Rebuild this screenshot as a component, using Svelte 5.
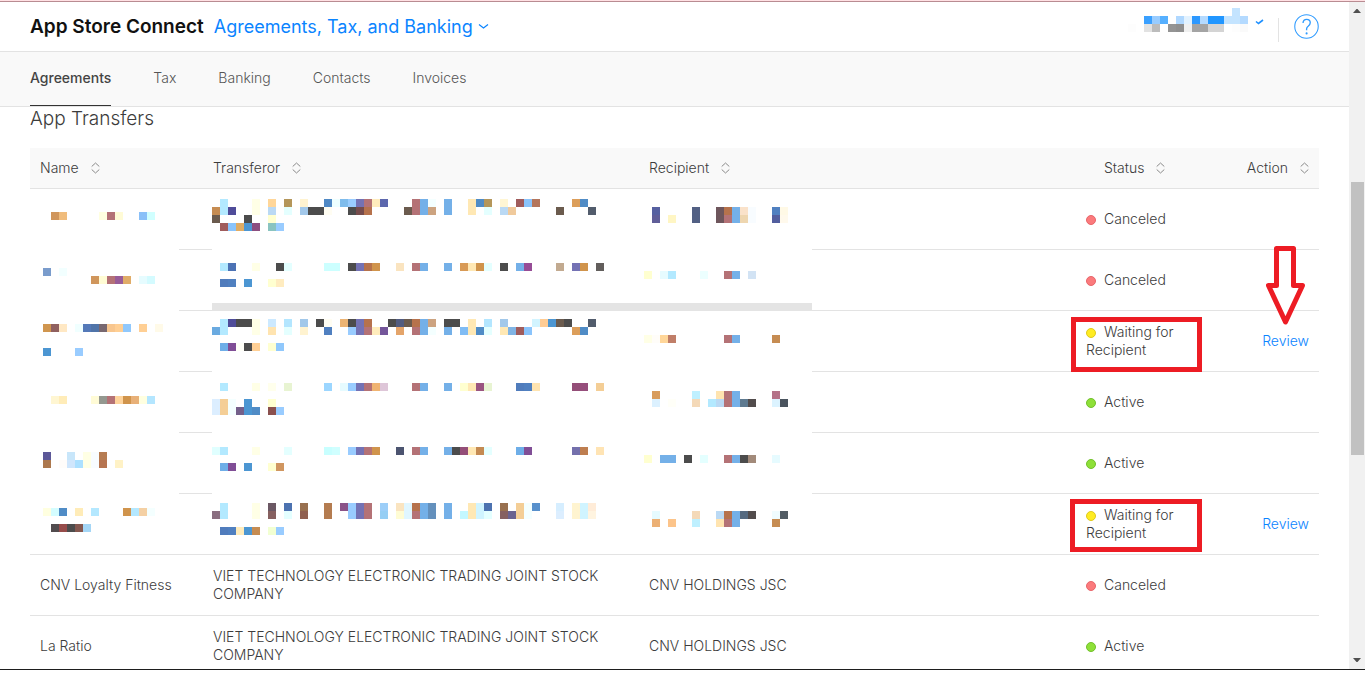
<script>
const tabs = ['Agreements', 'Tax', 'Banking', 'Contacts', 'Invoices'];
let activeTab = $state('Agreements');

const columns = [
    { key: 'name', label: 'Name' },
    { key: 'transferor', label: 'Transferor' },
    { key: 'recipient', label: 'Recipient' },
    { key: 'status', label: 'Status' },
    { key: 'action', label: 'Action' }
];

const company = 'VIET TECHNOLOGY ELECTRONIC TRADING JOINT STOCK COMPANY';

// hidden rows have no names, the mosaic covers them
const transfers = [
    { status: 'Canceled' },
    { status: 'Canceled' },
    { status: 'Waiting for Recipient', review: true },
    { status: 'Active' },
    { status: 'Active' },
    { status: 'Waiting for Recipient', review: true },
    { name: 'CNV Loyalty Fitness', transferor: company, recipient: 'CNV HOLDINGS JSC', status: 'Canceled' },
    { name: 'La Ratio', transferor: company, recipient: 'CNV HOLDINGS JSC', status: 'Active' }
];

const dotClass = {
    'Canceled': 'red',
    'Active': 'green',
    'Waiting for Recipient': 'yellow'
};

// each line: row number, then column:color for every tile
function parseTiles(text) {
    return text.trim().split('\n').flatMap((line) => {
        const [row, ...cells] = line.trim().split(' ');
        return cells.map((cell) => {
            const [col, color] = cell.split(':');
            return { x: col * 8, y: row * 8, color: '#' + color };
        });
    });
}

const accountTiles = parseTiles(`
0 13:c4e4ff
1 2:3aa0ff 3:98ccff 4:56b0ff 6:b0d8ff 7:e2f2ff 8:2c98ff 9:b4daff 10:2196ff 11:2196ff 12:c4e4ff 13:c4e4ff 14:b4daff
2 0:fdfdfd 2:e2e2e2 3:bcbcbc 5:949494 6:8f8f8f 7:f0f0f0 8:a4a4a4 9:a4a4a4 10:d4d4d4 11:d4d4d4 13:fdfdfd 14:fafafa
`);

const nameTiles = parseTiles(`
0 3:d0965c 4:f0bc7c 9:ffffe0 10:b47276 11:fffbd6 14:8ac0f8 15:d0ffff
7 2:7a9ccc 4:f2ffff
8 8:d0965c 9:fffcd4 10:b47276 11:985c98 12:e0ac68 14:e6fcff 15:d4fbff
14 2:d0964f 3:90605f 4:ffe8c4 6:f0ffff 7:5479b8 8:5074a8 9:786870 10:f8c68e 11:ffcf94 12:90c8fc 14:ffcf94 16:fffae8
17 2:4c96d2 6:99ccff
23 3:fff6d2 4:ffecb8 8:fffbd6 9:949890 10:b47276 11:ffd49c 12:d0944c 13:e8b078 14:ffffe0 15:b4e6ff
30 2:5c5898 5:c8e6fa 7:ffffe4 8:f8fcff 9:b67c52
31 2:ac784e 4:fffcfa 5:d0e6fc 6:ace0ff 7:ffffe4 8:f8fcff 9:b67450 11:fff2c6
37 2:ffffe0 3:d4fdff 4:508cc6 6:ffecb8 8:b4e8ff 12:d0944c 13:b4e8ff 14:f4d0a4 15:f4ffff
39 3:524c4e 4:964c4a 5:4c4c4c 6:845850 7:a4d6f6
`);

const companyTiles = parseTiles(`
0 1:b3e9ff 5:ffffe6 7:ffd699 9:b4965a 11:fff3d0 14:5089c5 15:edffff 16:7fbcec 17:99ccff 18:7472b4 19:b47276 20:ffecbc 21:5c67ad 25:b47276 26:74b0e8 27:f4ffff 29:74b0e8 32:ffe8b4 33:508cc6 34:b4965a 36:fff6d4 38:a05c5c 39:8ac4fc 40:b4765c 45:dc9e5a 46:508cc6
1 0:c68c52 1:b3e9ff 2:4f4c99 5:ffffe6 7:bad9f4 9:e4ffff 11:a2c8ea 12:4c4c4c 13:4c4c4c 14:fffdf2 17:4c4c4c 18:764c4c 19:b6724c 24:6b5b4e 25:b47276 26:74b0e8 27:cca380 29:74b0e8 32:ffe8b4 34:e4ffff 36:bad9f4 37:f0ca9c 43:6b5b4e 47:525c6c 55:5660a0 60:526084 63:6e565c 64:b6724c 65:74b0e8 66:fae2ca 67:f8fcff 70:5080c0 71:fff9e6
2 0:6b5b4e 4:4c4c4c 7:ffffd0 55:605e98 57:fff6c4 60:526084 63:6e565c 64:b47276 65:74b0e8 66:eed6b0 67:f8fcff 70:525e9e 71:fff9ec
3 1:a05c5c 2:8ac4fc 3:e0ac64 4:4c96d2 5:8c4e80 7:8ac4c0 8:99ccff
8 1:b3e9ff 2:4c72b4 5:ffffe6 8:4c4c4c 9:e4ffff 14:ccffff 15:ccffff 17:4c4c4c 18:7472b4 19:b6724c 20:d0944c 23:fae4c0 25:b47276 26:74b0e8 29:74b0e8 31:d89a56 32:ffe8b4 33:d0944c 34:e4ffff 36:4c4c4c 38:74b0e8 39:964c96 43:c2aa90 45:7472b4 46:d0944c 48:625e5c
9 54:ffffd0 56:e6fbff 57:b3e9ff 61:ecffff 64:b47276 65:74b0e8 67:d2e3f4
10 1:507cbc 2:5080c0 4:4c96d2 7:ffffd0 8:ffecc0
15 1:b3e9ff 2:4f4c99 3:4c4c4c 4:4c4c4c 5:ffffe6 7:cce9ff 9:b3e6ff 11:a2c8ea 13:4c4c4c 14:fffdf2 16:ecb474 17:4c4c4c 18:7472b4 19:b6724c 22:4c4c4c 23:525c80 24:6b5b4e 25:b6724c 26:74b0e8 27:cca380 29:4c4c4c 30:4c4c4c 32:ffe8b4 34:b3e6ff 36:a2c8ea 40:d2f4ff 41:ffcc94 42:4c96d2 43:6b5b4e 44:4c4c4c 47:525c6c
16 0:6aaae0 1:b3e9ff 5:ffffe6 7:ffe4b0 9:e4ffff 11:fff3d0 14:5080c0 17:99ccff 18:7472b4 19:b47276 20:ffecbc 21:74569a 23:e4a46a 25:b47276 26:74b0e8 27:f4ffff 29:74b0e8 31:80bcf4 32:ffe8b4 33:508cc6 34:e4ffff 36:ffe8b4 37:80b4e4 38:a05c5c 39:8ac4fc 45:dc9e5a 46:508cc6
17 54:ffffe6 55:fffdf9 56:ffd699 57:c07e68 64:b47276 65:74b0e8 70:c68c52
18 1:6eaee8 2:804e96 3:fffff8 4:4c4c4c 5:ffcf94 7:ffffd0 8:90c8fc
23 1:b3e9ff 5:ffffe6 7:ffffec 9:e8f4d2 14:9cd6ff 16:e6fbff 17:99ccff 18:7472b4 19:b47276 20:f0b472 21:dec6d8 25:b47276 26:74b0e8 29:74b0e8 31:ffffd0 32:ffe8b4 33:9a5480 34:e8f4d2 38:507cbc 39:5080c0 40:ffe4b0 45:944e78 46:964e7c 48:f4ce96
24 55:d89c5c 60:bff0ff 63:ffe4b0 64:b47276 65:74b0e8 70:b47288
25 0:dceeff 1:f4ce96 2:f4ffff 4:4c96d2 7:ffffd0 55:dcf1ff 57:fffff8 60:f4d9b8 62:b3e9ff 63:bad9f4 64:b47276 65:74b0e8 66:5e7a90 67:524c4c 70:dcf3ff 71:4a545e
26 0:dceeff 1:f4ce96 2:f4ffff 3:74608a 4:4c96d2 5:508cc6 7:8a504e 8:99ccff
31 0:e0ffff 1:b3e9ff 5:ffffe6 9:e4ffff 14:c8ffff 15:d0ffff 17:99ccff 18:7472b4 19:b47276 20:d0944c 23:4c5470 25:b47276 26:74b0e8 29:74b0e8 30:4c4c4c 31:944e78 32:ffe8b4 33:c48a52 34:e4ffff 38:6eaee8 39:804e96 45:7470ac 46:be7e50 48:ffe4b4
32 54:ffffd0 56:74b0e8 57:74b0e8 59:4c4c4c 61:e4ffff 64:b47276 65:74b0e8 66:4c4c4c 67:a28a7a 70:e6fbff
33 1:6eaee8 2:804e96 4:4c96d2 7:ffffd0 8:d09660
38 1:b3e9ff 5:ffffe6 7:6b5864 9:4c72b0 11:98704f 14:b47c50 16:8a5288 17:99ccff 18:7472b4 19:b47276 21:9ccef8 23:fae4c0 24:e0f6ff 25:b6724c 26:74b0e8 27:6490bc 29:74b0e8 32:ffe8b4 33:d0f4ff 34:4c72b0 36:98704f 38:f4ce96 39:f4ffff 40:5890cc 43:d6eeff 45:fff4d0 46:d0f4ff 47:ffecd8
39 0:8a6e80 1:b3e9ff 5:ffffe6 7:866060 9:e4ffff 11:906050 14:b47c50 17:99ccff 18:7472b4 19:b47276 21:96cef4 23:fffcd4 24:e0f6ff 25:b47276 26:74b0e8 27:6490bc 29:74b0e8 31:c4f8ff 32:ffe8b4 33:d0f4ff 34:e4ffff 36:866060 37:6a6290 38:f4ce96 39:f4ffff 43:dceeff 45:fff4d0 46:d0f4ff 47:fff4e0 55:e6fbff 60:f4d9b8 63:bad9f4 64:b6724c 65:74b0e8 66:566a80 67:524c4c 70:f0fcff 71:525c64
40 55:ecb074 57:fcc48a 60:bff0ff 63:ffe4b0 64:b47276 65:74b0e8 70:c68c52
41 1:507cbc 2:5080c0 3:ffecbc 4:4c96d2 5:c68c52 7:f2ffd2 8:99ccff
`);
</script>

{#snippet tiles(list)}
    {#each list as tile}
        <rect x={tile.x} y={tile.y} width="8" height="8" fill={tile.color} />
    {/each}
{/snippet}

<div class="window">
    <div class="viewport">
        <div class="page">
            <header class="header">
                <a class="brand" href="#home">App Store Connect</a>
                <button class="section-menu">
                    Agreements, Tax, and Banking
                    <svg width="11" height="7" viewBox="0 0 11 7">
                        <path d="M1 1.5 L5.5 5 L10 1.5" fill="none" stroke="#0a84ff" stroke-width="1.2" />
                    </svg>
                </button>
                <button class="account" aria-label="Account menu">
                    <svg width="136" height="37" viewBox="0 0 136 37" shape-rendering="crispEdges">
                        {@render tiles(accountTiles)}
                        <path d="M128 13.5 L130.5 15.5 L135 12" fill="none" stroke="#1e90ff" stroke-width="1.6" shape-rendering="auto" />
                    </svg>
                </button>
                <span class="divider"></span>
                <button class="help" aria-label="Help">
                    <svg width="25" height="25" viewBox="0 0 26 26" fill="none" stroke="#2f9bff">
                        <circle cx="13" cy="13" r="12.2" stroke-width="1.1" />
                        <path d="M9.4 9.4 C9.4 7 11 5.6 13.1 5.6 C15.3 5.6 16.9 7 16.9 9.1 C16.9 10.9 15.8 11.8 14.7 12.7 C13.5 13.6 13.1 14.2 13.1 15.6 V16.8" stroke-width="1.4" />
                        <circle cx="13.1" cy="20.2" r="1.1" fill="#2f9bff" stroke="none" />
                    </svg>
                </button>
            </header>

            <nav class="tabs">
                {#each tabs as tab}
                    <button class="tab" class:active={tab === activeTab} onclick={() => (activeTab = tab)}>
                        {tab}
                    </button>
                {/each}
            </nav>

            <main class="content">
                <h2>App Transfers</h2>
                <div class="table-wrap">
                    <table>
                        <thead>
                            <tr>
                                {#each columns as column}
                                    <th class={column.key}>
                                        <button class="sort">
                                            {column.label}
                                            <svg width="9" height="12" viewBox="0 0 9 12" fill="none" stroke="#8a8a8a">
                                                <path d="M0.7 4.5 L4.5 1 L8.3 4.5 M0.7 7.5 L4.5 11 L8.3 7.5" />
                                            </svg>
                                        </button>
                                    </th>
                                {/each}
                            </tr>
                        </thead>
                        <tbody>
                            {#each transfers as transfer}
                                <tr>
                                    <td>{transfer.name ?? ''}</td>
                                    <td>{transfer.transferor ?? ''}</td>
                                    <td>{transfer.recipient ?? ''}</td>
                                    <td><span class="dot {dotClass[transfer.status]}"></span>{transfer.status}</td>
                                    <td class="action">
                                        {#if transfer.review}
                                            <a href="#review">Review</a>
                                        {/if}
                                    </td>
                                </tr>
                            {/each}
                        </tbody>
                    </table>

                    <svg class="mosaic names" width="152" height="328" viewBox="0 0 152 328" shape-rendering="crispEdges">
                        <rect width="152" height="328" fill="#fff" />
                        {@render tiles(nameTiles)}
                    </svg>
                    <svg class="mosaic companies" width="600" height="336" viewBox="0 0 600 336" shape-rendering="crispEdges">
                        <rect width="600" height="336" fill="#fff" />
                        <rect y="104" width="600" height="8" fill="#e4e4e4" />
                        {@render tiles(companyTiles)}
                    </svg>

                    <div class="mark first"></div>
                    <div class="mark second"></div>
                    <svg class="arrow" width="40" height="80" viewBox="0 0 40 80">
                        <path d="M10.5 2.5 H27.5 V39.5 H36.5 L19.5 76 L2.5 39.5 H10.5 Z" fill="#fff" stroke="#ed1c24" stroke-width="5" stroke-linejoin="round" />
                    </svg>
                </div>
            </main>
        </div>

        <div class="scrollbar">
            <svg width="16" height="17" viewBox="0 0 16 17"><path d="M4 11 L7.5 7 L8.5 7 L12 11 Z" fill="#505050" /></svg>
            <div class="track"><div class="thumb"></div></div>
            <svg width="16" height="17" viewBox="0 0 16 17"><path d="M4 6 L7.5 10 L8.5 10 L12 6 Z" fill="#505050" /></svg>
        </div>
    </div>
</div>

<style>
:global(body) {
    background: #fff;
}

.window {
    box-sizing: border-box;
    height: 100vh;
    padding-bottom: 28px;
    border-top: 1px solid #ffe1e4;
    font-family: Inter, "Liberation Sans", sans-serif;
    font-size: 14px;
    font-weight: 300;
    line-height: 18px;
    color: #3c3c3c;
}

.viewport {
    box-sizing: border-box;
    display: flex;
    height: 100%;
    overflow: hidden;
    border-top: 1px solid #b98c92;
    border-bottom: 1px solid #1e1e1e;
}

.page {
    flex: 1;
    min-width: 0;
}

button {
    margin: 0;
    padding: 0;
    border: 0;
    background: none;
    font: inherit;
    color: inherit;
    cursor: pointer;
}

svg {
    display: block;
}

a {
    color: #0a84ff;
    text-decoration: none;
}

.header {
    display: flex;
    align-items: center;
    height: 49px;
    padding: 0 30px;
    border-bottom: 1px solid #e3e3e3;
    line-height: 24px;
}

.brand {
    margin-right: 10px;
    font-size: 19px;
    font-weight: 600;
    color: #111;
}

.section-menu {
    display: flex;
    align-items: center;
    gap: 5px;
    font-size: 18px;
    font-weight: 400;
    color: #0a84ff;
}

.account {
    margin-left: auto;
}

.divider {
    width: 1px;
    height: 24px;
    margin: 7px 15px 0 14px;
    background: #e3e3e3;
}

.tabs {
    display: flex;
    gap: 42px;
    height: 54px;
    padding: 0 30px;
    border-bottom: 1px solid #e3e3e3;
    background: #f9f9f9;
}

.tab {
    padding-bottom: 2px;
    border-bottom: 1px solid transparent;
    color: #555;
}

.tab.active {
    border-color: #333;
    font-weight: 500;
    color: #444;
}

.content {
    padding: 0 30px;
}

h2 {
    margin: 0 0 17px;
    font-size: 19px;
    font-weight: 300;
    line-height: 24px;
}

.table-wrap {
    position: relative;
}

table {
    width: 100%;
    table-layout: fixed;
    border-collapse: separate;
    border-spacing: 0;
}

th,
td {
    box-sizing: border-box;
    padding: 0 10px;
    border-bottom: 1px solid #e3e3e3;
    text-align: left;
    vertical-align: middle;
}

th {
    height: 41px;
    background: #f9f9f9;
    font-weight: 300;
}

td {
    height: 61px;
}

th.name {
    width: 173px;
}

th.transferor {
    width: 436px;
}

th.status {
    width: 120px;
    padding-left: 28px;
}

th.action {
    width: 123px;
}

.action {
    text-align: right;
}

.sort {
    display: inline-flex;
    align-items: center;
    gap: 12px;
}

.dot {
    display: inline-block;
    box-sizing: border-box;
    width: 10px;
    height: 10px;
    margin-right: 8px;
    border: 1px solid;
    border-radius: 50%;
    vertical-align: -1px;
}

.dot.red {
    border-color: #e8656a;
    background: #fb7a7c;
}

.dot.yellow {
    border-color: #dfc91c;
    background: #ffec22;
}

.dot.green {
    border-color: #72c02c;
    background: #8ee038;
}

.mosaic {
    position: absolute;
}

.names {
    top: 64px;
    left: -3px;
}

.companies {
    top: 51px;
    left: 182px;
}

.mark {
    position: absolute;
    right: 117px;
    box-sizing: border-box;
    border: 5px solid #ed1c24;
}

.mark.first {
    top: 169px;
    width: 131px;
    height: 55px;
}

.mark.second {
    top: 351px;
    width: 132px;
    height: 53px;
}

.arrow {
    position: absolute;
    top: 98px;
    right: 13px;
}

.scrollbar {
    display: flex;
    flex-direction: column;
    width: 16px;
    background: #f1f1f1;
}

.track {
    display: grid;
    flex: 1;
    grid-template-rows: 163fr 273fr 197fr;
}

.thumb {
    grid-row: 2;
    margin: 0 1px 0 2px;
    background: #c1c1c1;
}
</style>
